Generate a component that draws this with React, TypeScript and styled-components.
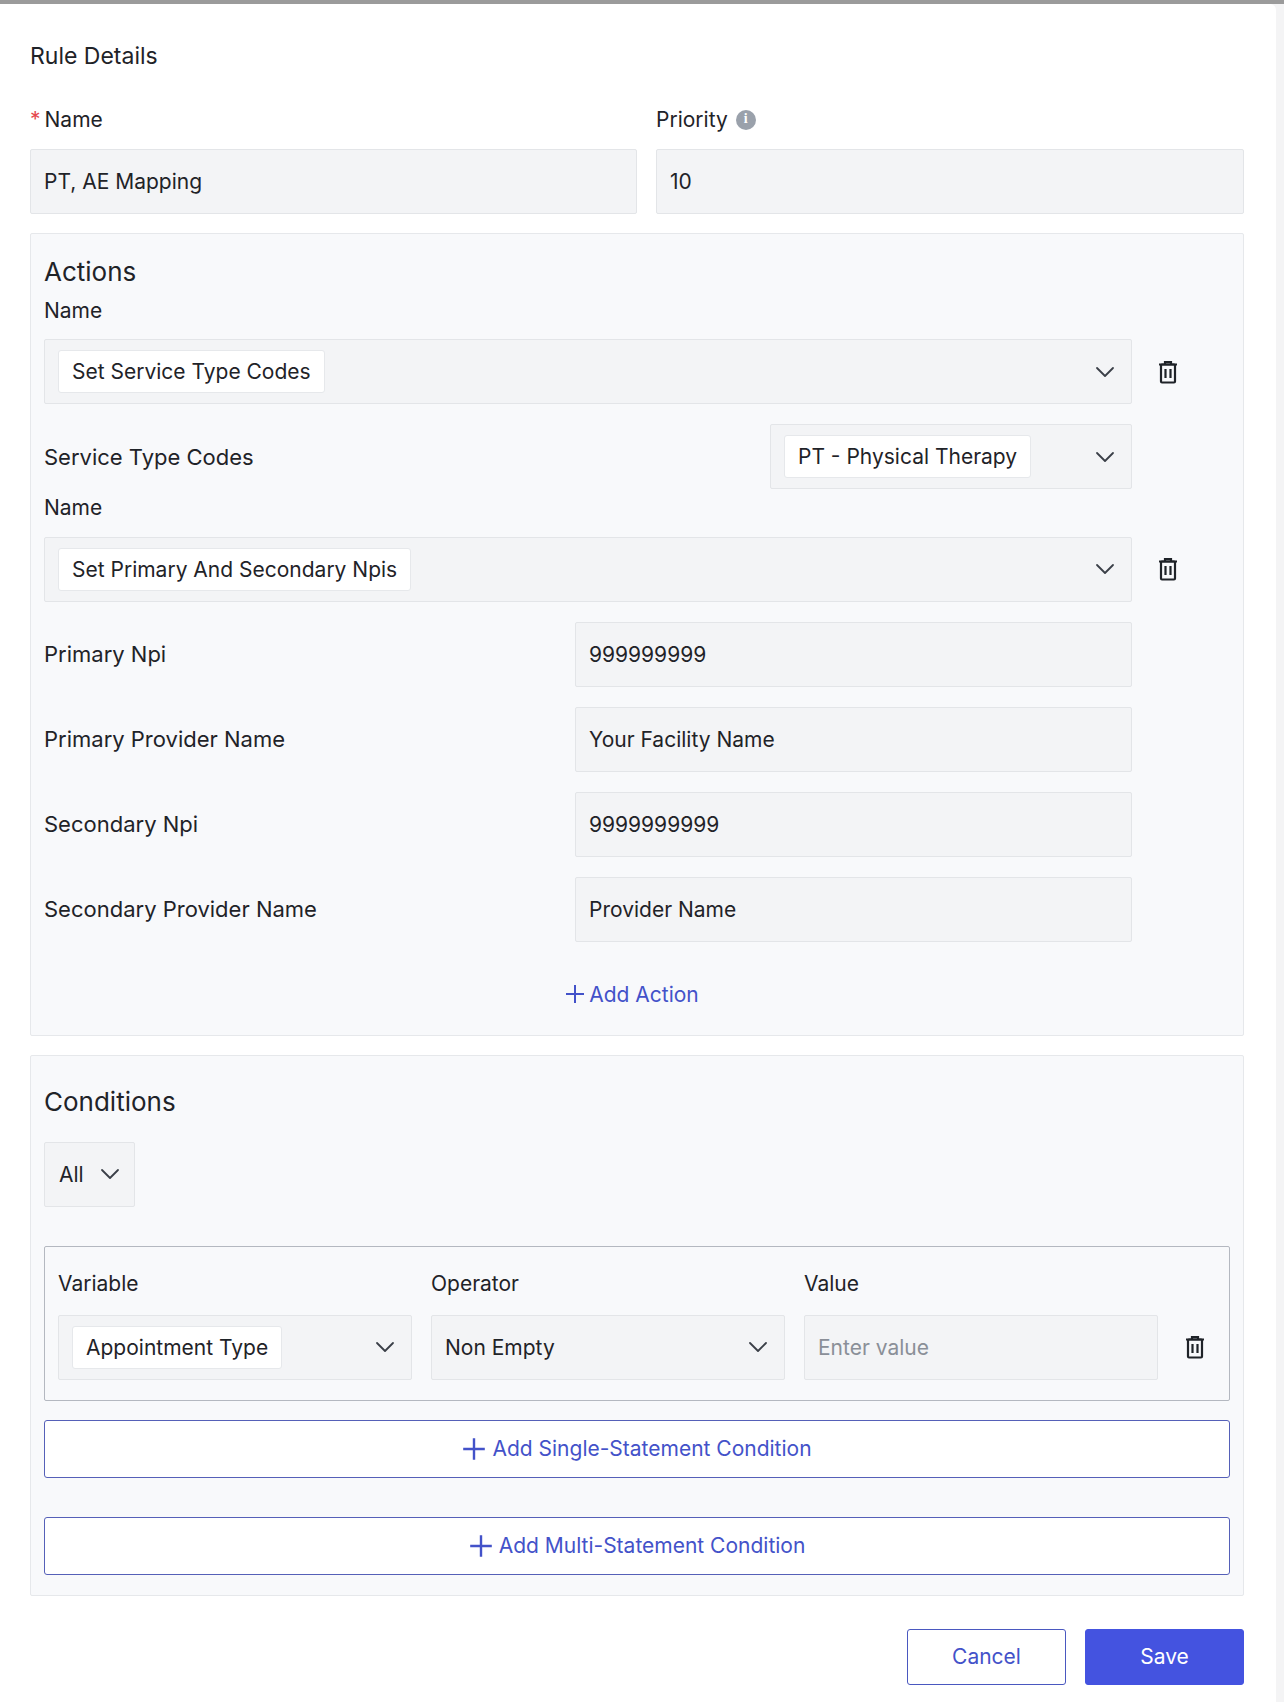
import styled, { createGlobalStyle } from 'styled-components';

const Global = createGlobalStyle`
  html, body { margin: 0; padding: 0; background: #e9e9ea; }
  body { font-family: Inter, "Noto Sans", sans-serif; color: #1f2328; }
`;

const Page = styled.div`
  border-top: 4px solid #9b9b9b;
  width: 1284px;
  height: 1698px;
  background: #f4f4f5;
`;

const Modal = styled.div`
  width: 1276px;
  height: 1698px;
  background: #fff;
  border-radius: 0 6px 0 0;
  box-sizing: border-box;
  padding: 38px 32px 0 30px;
  display: flex;
  flex-direction: column;
`;

const Title = styled.h2`
  margin: 0 0 37px;
  font-size: 23px;
  font-weight: 400;
`;

const TopGrid = styled.div`
  display: grid;
  grid-template-columns: 607px 588px;
  column-gap: 19px;
  row-gap: 17px;
`;

const Label = styled.div<{ $size?: number }>`
  font-size: ${(p) => p.$size || 21}px;
  display: flex;
  align-items: center;
  gap: 8px;
  line-height: 1.2;
`;

const Star = styled.span`
  color: #e5484d;
  margin-right: -4px;
`;

const Info = styled.span`
  width: 20px;
  height: 20px;
  border-radius: 50%;
  background: #9aa1ab;
  color: #fff;
  font-size: 14px;
  font-weight: 700;
  display: inline-flex;
  align-items: center;
  justify-content: center;
  font-family: "Liberation Serif", serif;
`;

const Field = styled.div<{ $w?: number; $placeholder?: boolean }>`
  height: 65px;
  ${(p) => (p.$w ? `width: ${p.$w}px;` : '')}
  box-sizing: border-box;
  background: #f3f4f6;
  border: 1px solid #e3e5e8;
  border-radius: 2px;
  display: flex;
  align-items: center;
  padding: 0 13px;
  font-size: 21px;
  color: ${(p) => (p.$placeholder ? '#8a8f98' : '#1f2328')};
`;

const Panel = styled.section<{ $pb: number }>`
  margin-top: 19px;
  background: #f8f9fb;
  border: 1px solid #e6e8eb;
  border-radius: 2px;
  padding: 22px 13px ${(p) => p.$pb}px;
  display: flex;
  flex-direction: column;
`;

const PanelTitle = styled.div`
  font-size: 26px;
  line-height: 32px;
`;

const SelectRow = styled.div`
  display: flex;
  align-items: center;
  gap: 25px;
`;

const Select = styled.div<{ $w: number }>`
  width: ${(p) => p.$w}px;
  height: 65px;
  box-sizing: border-box;
  background: #f3f4f6;
  border: 1px solid #e3e5e8;
  border-radius: 2px;
  display: flex;
  align-items: center;
  justify-content: space-between;
  padding: 0 16px 0 13px;
  font-size: 21px;
`;

const Chip = styled.span`
  background: #fff;
  border: 1px solid #e6e8eb;
  border-radius: 3px;
  padding: 8px 13px;
`;

const PairRow = styled.div<{ $mt?: number }>`
  display: grid;
  grid-template-columns: 531px 557px;
  align-items: center;
  margin-top: ${(p) => p.$mt ?? 20}px;
`;

const AddAction = styled.div`
  margin-top: 40px;
  align-self: center;
  color: #4352c9;
  font-size: 21px;
  display: flex;
  align-items: center;
  gap: 4px;
  margin-right: 10px;
`;

const CondBox = styled.div`
  margin-top: 39px;
  border: 1.5px solid #b4b8c0;
  border-radius: 2px;
  padding: 24px 13px 20px;
  display: grid;
  grid-template-columns: 354px 354px 354px 40px;
  column-gap: 19px;
  row-gap: 19px;
  align-items: center;
`;

const WideButton = styled.div<{ $mt: number }>`
  margin-top: ${(p) => p.$mt}px;
  height: 56px;
  border: 1.5px solid #5560b8;
  border-radius: 3px;
  background: #fff;
  display: flex;
  align-items: center;
  justify-content: center;
  gap: 6px;
  color: #4352c9;
  font-size: 21px;
`;

const Footer = styled.div`
  display: flex;
  justify-content: flex-end;
  gap: 19px;
  margin-top: 33px;
`;

const Btn = styled.button<{ $primary?: boolean }>`
  width: 159px;
  height: 56px;
  border-radius: 3px;
  font-family: inherit;
  font-size: 21px;
  border: 1.5px solid ${(p) => (p.$primary ? '#4453e0' : '#4a58c0')};
  background: ${(p) => (p.$primary ? '#4453e0' : '#fff')};
  color: ${(p) => (p.$primary ? '#fff' : '#4352c9')};
`;

const Chevron = () => (
  <svg width="20" height="20" viewBox="0 0 20 20" fill="none" stroke="#3a3f47" strokeWidth="1.8" strokeLinecap="round" strokeLinejoin="round">
    <path d="M2 6l8 8 8-8" />
  </svg>
);

const Trash = () => (
  <svg width="22" height="24" viewBox="0 0 22 24" fill="none" stroke="#1f2328" strokeWidth="2.2">
    <path d="M2 4.5h18M8 4.5V2h6v2.5" />
    <rect x="4" y="4.5" width="14" height="18" rx="1" />
    <path d="M8.5 9v9M13.5 9v9" />
  </svg>
);

const Plus = ({ size = 20 }: { size?: number }) => (
  <svg width={size} height={size} viewBox="0 0 20 20" stroke="#4352c9" strokeWidth="2">
    <path d="M10 1v18M1 10h18" />
  </svg>
);

const TrashCell = styled.div<{ $ml?: number }>`
  display: flex;
  margin-left: ${(p) => p.$ml ?? 0}px;
`;

const pairs = [
  ['Primary Npi', '999999999'],
  ['Primary Provider Name', 'Your Facility Name'],
  ['Secondary Npi', '9999999999'],
  ['Secondary Provider Name', 'Provider Name'],
];

export default function App() {
  return (
    <Page>
      <Global />
      <Modal>
        <Title>Rule Details</Title>
        <TopGrid>
          <Label>
            <Star>*</Star> Name
          </Label>
          <Label>
            Priority <Info>i</Info>
          </Label>
          <Field>PT, AE Mapping</Field>
          <Field>10</Field>
        </TopGrid>

        <Panel $pb={28}>
          <PanelTitle>Actions</PanelTitle>
          <Label style={{ margin: '10px 0 16px' }}>Name</Label>
          <SelectRow>
            <Select $w={1088}>
              <Chip>Set Service Type Codes</Chip>
              <Chevron />
            </Select>
            <TrashCell><Trash /></TrashCell>
          </SelectRow>
          <PairRow $mt={20} style={{ gridTemplateColumns: '726px 362px' }}>
            <Label $size={22}>Service Type Codes</Label>
            <Select $w={362}>
              <Chip>PT - Physical Therapy</Chip>
              <Chevron />
            </Select>
          </PairRow>
          <Label style={{ margin: '6px 0 16px' }}>Name</Label>
          <SelectRow>
            <Select $w={1088}>
              <Chip>Set Primary And Secondary Npis</Chip>
              <Chevron />
            </Select>
            <TrashCell><Trash /></TrashCell>
          </SelectRow>
          {pairs.map(([k, v], i) => (
            <PairRow key={k} $mt={i === 0 ? 20 : 20}>
              <Label $size={22}>{k}</Label>
              <Field>{v}</Field>
            </PairRow>
          ))}
          <AddAction>
            <Plus /> Add Action
          </AddAction>
        </Panel>

        <Panel $pb={20}>
          <PanelTitle style={{ marginTop: 8 }}>Conditions</PanelTitle>
          <Select $w={91} style={{ marginTop: 24, padding: '0 14px' }}>
            All <Chevron />
          </Select>
          <CondBox>
            <Label>Variable</Label>
            <Label>Operator</Label>
            <Label>Value</Label>
            <div />
            <Select $w={354}>
              <Chip>Appointment Type</Chip>
              <Chevron />
            </Select>
            <Select $w={354}>
              Non Empty
              <Chevron />
            </Select>
            <Field $placeholder>Enter value</Field>
            <TrashCell $ml={7}><Trash /></TrashCell>
          </CondBox>
          <WideButton $mt={19}>
            <Plus size={24} /> Add Single-Statement Condition
          </WideButton>
          <WideButton $mt={39}>
            <Plus size={24} /> Add Multi-Statement Condition
          </WideButton>
        </Panel>

        <Footer>
          <Btn>Cancel</Btn>
          <Btn $primary>Save</Btn>
        </Footer>
      </Modal>
    </Page>
  );
}
